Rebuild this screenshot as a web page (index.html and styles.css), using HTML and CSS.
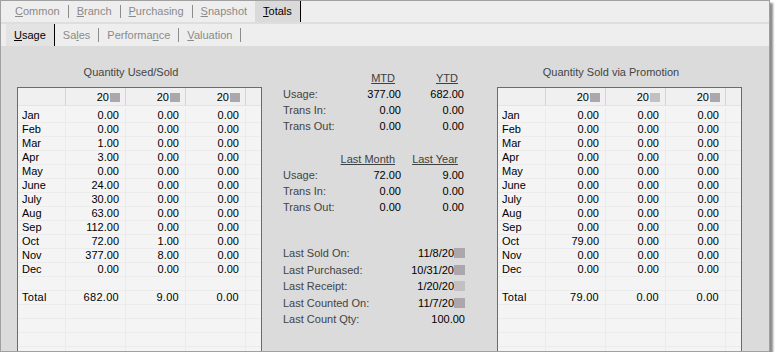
FILE: index.html
```html
<!DOCTYPE html>
<html lang="en">
<head>
  <meta charset="UTF-8">
  <meta name="viewport" content="width=device-width, initial-scale=1.0">
  <title>Item Totals - Usage</title>
  <link rel="stylesheet" href="styles.css">
</head>
<body>
  <div class="window">
    <div class="tabs tabs-main">
      <span class="tab"><u>C</u>ommon</span><span class="sep"></span>
      <span class="tab"><u>B</u>ranch</span><span class="sep"></span>
      <span class="tab"><u>P</u>urchasing</span><span class="sep"></span>
      <span class="tab"><u>S</u>napshot</span>
      <span class="tab active"><u>T</u>otals</span>
    </div>
    <div class="tabs tabs-sub">
      <span class="tab active"><u>U</u>sage</span>
      <span class="tab">Sa<u>l</u>es</span><span class="sep"></span>
      <span class="tab">Performa<u>n</u>ce</span><span class="sep"></span>
      <span class="tab"><u>V</u>aluation</span><span class="sep"></span>
    </div>

    <div class="content">
      <section class="panel">
        <div class="panel-title">Quantity Used/Sold</div>
        <table class="grid">
          <colgroup><col class="c-label"><col class="c-num"><col class="c-num"><col class="c-num"><col></colgroup>
          <thead>
            <tr><th></th><th>20<span class="blot"></span></th><th>20<span class="blot"></span></th><th>20<span class="blot"></span></th><th></th></tr>
          </thead>
          <tbody>
            <tr class="gap"><td colspan="5"></td></tr>
            <tr><td class="m">Jan</td><td>0.00</td><td>0.00</td><td>0.00</td><td></td></tr>
            <tr><td class="m">Feb</td><td>0.00</td><td>0.00</td><td>0.00</td><td></td></tr>
            <tr><td class="m">Mar</td><td>1.00</td><td>0.00</td><td>0.00</td><td></td></tr>
            <tr><td class="m">Apr</td><td>3.00</td><td>0.00</td><td>0.00</td><td></td></tr>
            <tr><td class="m">May</td><td>0.00</td><td>0.00</td><td>0.00</td><td></td></tr>
            <tr><td class="m">June</td><td>24.00</td><td>0.00</td><td>0.00</td><td></td></tr>
            <tr><td class="m">July</td><td>30.00</td><td>0.00</td><td>0.00</td><td></td></tr>
            <tr><td class="m">Aug</td><td>63.00</td><td>0.00</td><td>0.00</td><td></td></tr>
            <tr><td class="m">Sep</td><td>112.00</td><td>0.00</td><td>0.00</td><td></td></tr>
            <tr><td class="m">Oct</td><td>72.00</td><td>1.00</td><td>0.00</td><td></td></tr>
            <tr><td class="m">Nov</td><td>377.00</td><td>8.00</td><td>0.00</td><td></td></tr>
            <tr><td class="m">Dec</td><td>0.00</td><td>0.00</td><td>0.00</td><td></td></tr>
            <tr><td></td><td></td><td></td><td></td><td></td></tr>
            <tr class="total"><td class="m">Total</td><td>682.00</td><td>9.00</td><td>0.00</td><td></td></tr>
            <tr><td></td><td></td><td></td><td></td><td></td></tr>
            <tr><td></td><td></td><td></td><td></td><td></td></tr>
            <tr><td></td><td></td><td></td><td></td><td></td></tr>
            <tr><td></td><td></td><td></td><td></td><td></td></tr>
          </tbody>
        </table>
      </section>

      <section class="summary">
        <div class="stats">
          <span></span><span class="head"><u>MTD</u></span><span class="head"><u>YTD</u></span>
          <span class="label">Usage:</span><span class="val">377.00</span><span class="val">682.00</span>
          <span class="label">Trans In:</span><span class="val">0.00</span><span class="val">0.00</span>
          <span class="label">Trans Out:</span><span class="val">0.00</span><span class="val">0.00</span>
        </div>
        <div class="stats">
          <span></span><span class="head"><u>Last Month</u></span><span class="head"><u>Last Year</u></span>
          <span class="label">Usage:</span><span class="val">72.00</span><span class="val">9.00</span>
          <span class="label">Trans In:</span><span class="val">0.00</span><span class="val">0.00</span>
          <span class="label">Trans Out:</span><span class="val">0.00</span><span class="val">0.00</span>
        </div>
        <div class="dates">
          <span class="label">Last Sold On:</span><span class="val">11/8/20<span class="blot"></span></span>
          <span class="label">Last Purchased:</span><span class="val">10/31/20<span class="blot"></span></span>
          <span class="label">Last Receipt:</span><span class="val">1/20/20<span class="blot light"></span></span>
          <span class="label">Last Counted On:</span><span class="val">11/7/20<span class="blot"></span></span>
          <span class="label">Last Count Qty:</span><span class="val">100.00</span>
        </div>
      </section>

      <section class="panel">
        <div class="panel-title">Quantity Sold via Promotion</div>
        <table class="grid">
          <colgroup><col class="c-label"><col class="c-num"><col class="c-num"><col class="c-num"><col></colgroup>
          <thead>
            <tr><th></th><th>20<span class="blot"></span></th><th>20<span class="blot light"></span></th><th>20<span class="blot"></span></th><th></th></tr>
          </thead>
          <tbody>
            <tr class="gap"><td colspan="5"></td></tr>
            <tr><td class="m">Jan</td><td>0.00</td><td>0.00</td><td>0.00</td><td></td></tr>
            <tr><td class="m">Feb</td><td>0.00</td><td>0.00</td><td>0.00</td><td></td></tr>
            <tr><td class="m">Mar</td><td>0.00</td><td>0.00</td><td>0.00</td><td></td></tr>
            <tr><td class="m">Apr</td><td>0.00</td><td>0.00</td><td>0.00</td><td></td></tr>
            <tr><td class="m">May</td><td>0.00</td><td>0.00</td><td>0.00</td><td></td></tr>
            <tr><td class="m">June</td><td>0.00</td><td>0.00</td><td>0.00</td><td></td></tr>
            <tr><td class="m">July</td><td>0.00</td><td>0.00</td><td>0.00</td><td></td></tr>
            <tr><td class="m">Aug</td><td>0.00</td><td>0.00</td><td>0.00</td><td></td></tr>
            <tr><td class="m">Sep</td><td>0.00</td><td>0.00</td><td>0.00</td><td></td></tr>
            <tr><td class="m">Oct</td><td>79.00</td><td>0.00</td><td>0.00</td><td></td></tr>
            <tr><td class="m">Nov</td><td>0.00</td><td>0.00</td><td>0.00</td><td></td></tr>
            <tr><td class="m">Dec</td><td>0.00</td><td>0.00</td><td>0.00</td><td></td></tr>
            <tr><td></td><td></td><td></td><td></td><td></td></tr>
            <tr class="total"><td class="m">Total</td><td>79.00</td><td>0.00</td><td>0.00</td><td></td></tr>
            <tr><td></td><td></td><td></td><td></td><td></td></tr>
            <tr><td></td><td></td><td></td><td></td><td></td></tr>
            <tr><td></td><td></td><td></td><td></td><td></td></tr>
            <tr><td></td><td></td><td></td><td></td><td></td></tr>
          </tbody>
        </table>
      </section>
    </div>
  </div>
</body>
</html>
```

FILE: styles.css
```css
body {
  margin: 0;
  padding: 0;
  background: #fff;
  font-family: "Liberation Sans", Arial, sans-serif;
  font-size: 11px;
  color: #000;
}
.window {
  width: 768px;
  height: 350px;
  border: 1px solid #a0a0a0;
  background: #dbdbdb;
  box-shadow: 3px 3px 2px rgba(0, 0, 0, 0.45);
  overflow: hidden;
}

/* tab strips */
.tabs {
  display: flex;
  align-items: center;
  background: #eeeeee;
}
.tabs-main {
  height: 21px;
  padding-left: 6px;
  border-bottom: 2px solid #dedede;
}
.tabs-sub {
  height: 22px;
  padding-left: 5px;
}
.tab {
  height: 100%;
  line-height: 21px;
  padding: 0 8px;
  color: #8a8a8a;
  box-sizing: border-box;
}
.tabs-sub .tab {
  line-height: 22px;
}
.tab.active {
  color: #000;
  background: #dadada;
  border-right: 1px solid #000;
}
.tabs-sub .tab.active {
  background: #e3e3e3;
}
.sep {
  width: 1px;
  height: 13px;
  background: #8c8c8c;
}
.tabs-sub .sep {
  height: 14px;
}

/* content */
.content {
  display: flex;
  height: 305px;
  padding-left: 16px;
  overflow: hidden;
}
.panel {
  width: 245px;
  padding-top: 19px;
}
.panel-title {
  width: 228px;
  height: 14px;
  line-height: 14px;
  margin-bottom: 8px;
  text-align: center;
  color: #444;
}

.grid {
  width: 245px;
  table-layout: fixed;
  border-collapse: separate;
  border-spacing: 0;
  border: 1px solid #6b6b6b;
  border-bottom: none;
  background: #f4f4f4;
}
.c-label { width: 47px; }
.c-num { width: 60px; }
.grid th {
  height: 17px;
  padding: 0 5px 0 0;
  background: #f0f0f0;
  font-weight: normal;
  text-align: right;
  border-left: 1px solid #d4d4d4;
  border-bottom: 1px solid #e4e4e4;
}
.grid th:first-child,
.grid td:first-child {
  border-left: none;
}
.grid tr {
  height: 14px;
}
.grid td {
  height: 13px;
  padding: 0 6px 0 0;
  line-height: 13px;
  text-align: right;
  white-space: nowrap;
  border-left: 1px solid #ebebeb;
  border-bottom: 1px solid #ebebeb;
}
.grid .gap {
  height: 3px;
}
.grid .gap td {
  height: 3px;
  border: none;
}
.grid td.m {
  padding: 0 0 0 4px;
  text-align: left;
}
.grid .total td {
  letter-spacing: 0.3px;
}

.blot {
  display: inline-block;
  width: 10px;
  height: 9px;
  margin-left: 1px;
  background: #aca7ac;
  vertical-align: -1px;
}
.blot.light {
  background: #c3bfc3;
}

/* middle summary */
.summary {
  width: 214px;
  padding: 24px 0 0 21px;
}
.stats {
  display: grid;
  grid-template-columns: 56px 62px 63px;
  grid-auto-rows: 16px;
  line-height: 16px;
}
.stats + .stats {
  margin-top: 17px;
}
.label {
  color: #444;
  white-space: nowrap;
}
.head {
  text-align: right;
  padding-right: 6px;
  color: #404040;
  white-space: nowrap;
}
.val {
  text-align: right;
  white-space: nowrap;
}
.dates {
  display: grid;
  grid-template-columns: 100px 82px;
  grid-auto-rows: 16.5px;
  line-height: 16px;
  margin-top: 30px;
}
.dates .blot {
  width: 11px;
  height: 10px;
  margin-left: 0;
}
```
